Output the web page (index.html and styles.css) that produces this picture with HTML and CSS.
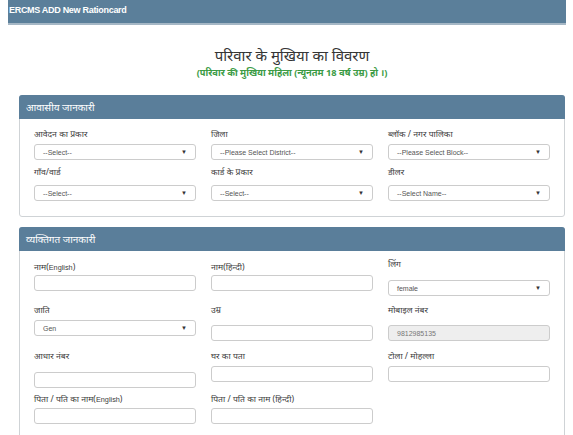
FILE: index.html
```html
<!DOCTYPE html>
<html lang="hi">
<head>
<meta charset="utf-8">
<title>ERCMS ADD New Rationcard</title>
<link rel="stylesheet" href="styles.css">
</head>
<body>
<div class="page">
  <div class="topbar">ERCMS ADD New Rationcard</div>
  <div class="intro">
    <h1 class="title">परिवार के मुखिया का विवरण</h1>
    <p class="subtitle">(परिवार की मुखिया महिला (न्यूनतम 18 वर्ष उम्र) हो ।)</p>
  </div>

  <section class="panel panel-first">
    <div class="panel-heading">आवासीय जानकारी</div>
    <div class="panel-body body-a">
      <div class="row row-a1">
        <div class="field"><label class="lbl">आवेदन का प्रकार</label><div class="ctrl sel g4"><span>--Select--</span><i class="arrow">▼</i></div></div>
        <div class="field"><label class="lbl">जिला</label><div class="ctrl sel g4"><span>--Please Select District--</span><i class="arrow">▼</i></div></div>
        <div class="field"><label class="lbl">ब्लॉक / नगर पालिका</label><div class="ctrl sel g4"><span>--Please Select Block--</span><i class="arrow">▼</i></div></div>
      </div>
      <div class="row row-a2">
        <div class="field"><label class="lbl">गाँव/वार्ड</label><div class="ctrl sel g7"><span>--Select--</span><i class="arrow">▼</i></div></div>
        <div class="field"><label class="lbl">कार्ड के प्रकार</label><div class="ctrl sel g7"><span>--Select--</span><i class="arrow">▼</i></div></div>
        <div class="field"><label class="lbl">डीलर</label><div class="ctrl sel g7"><span>--Select Name--</span><i class="arrow">▼</i></div></div>
      </div>
    </div>
  </section>

  <section class="panel panel-second">
    <div class="panel-heading">व्यक्तिगत जानकारी</div>
    <div class="panel-body body-b">
      <div class="row row-b1">
        <div class="field"><label class="lbl">नाम(<span class="en">English</span>)</label><div class="ctrl g2"></div></div>
        <div class="field"><label class="lbl">नाम(हिन्दी)</label><div class="ctrl g2"></div></div>
        <div class="field"><label class="lbl lift">लिंग</label><div class="ctrl sel g10"><span>female</span><i class="arrow">▼</i></div></div>
      </div>
      <div class="row row-b2">
        <div class="field"><label class="lbl">जाति</label><div class="ctrl sel g4"><span>Gen</span><i class="arrow">▼</i></div></div>
        <div class="field"><label class="lbl">उम्र</label><div class="ctrl g9"></div></div>
        <div class="field"><label class="lbl">मोबाइल नंबर</label><div class="ctrl ro g9"><span>9812985135</span></div></div>
      </div>
      <div class="row row-b3">
        <div class="field"><label class="lbl">आधार नंबर</label><div class="ctrl g10"></div></div>
        <div class="field"><label class="lbl">घर का पता</label><div class="ctrl g4"></div></div>
        <div class="field"><label class="lbl">टोला / मोहल्ला</label><div class="ctrl g4"></div></div>
      </div>
      <div class="row row-b4">
        <div class="field"><label class="lbl">पिता / पति का नाम(<span class="en">English</span>)</label><div class="ctrl g3"></div></div>
        <div class="field"><label class="lbl">पिता / पति का नाम (हिन्दी)</label><div class="ctrl g3"></div></div>
        <div class="field"></div>
      </div>
    </div>
  </section>
</div>
</body>
</html>
```

FILE: styles.css
```css
* { box-sizing: border-box; }
html, body { margin: 0; padding: 0; background: #ffffff; }
body {
  font-family: "Noto Sans", "Liberation Sans", sans-serif;
  color: #333333;
  overflow: hidden;
  height: 435px;
}
.page {
  width: 573px;
}
.topbar {
  margin-left: 8px;
  width: 558px;
  height: 25px;
  background: #5b7f9a;
  border-bottom: 2px solid #a5b7c5;
  color: #ffffff;
  font-family: "Liberation Sans", Arial, sans-serif;
  font-weight: bold;
  font-size: 9px;
  letter-spacing: -0.3px;
  line-height: 21px;
  padding-left: 1px;
}
.intro {
  margin-left: 19px;
  width: 546px;
  text-align: center;
  padding-top: 20px;
  height: 70px;
}
.title {
  margin: 0;
  font-size: 15px;
  line-height: 21px;
  font-weight: normal;
  color: #353535;
}
.subtitle {
  margin: 0;
  font-size: 9.3px;
  line-height: 13px;
  font-weight: bold;
  color: #3b9b45;
}
.panel {
  margin-left: 19px;
  width: 546px;
  border: 1px solid #cfd3d6;
  border-radius: 3px;
  background: #ffffff;
}
.panel-second {
  margin-top: 10px;
}
.panel-heading {
  background: #5a7e9a;
  color: #ffffff;
  font-size: 10px;
  height: 24px;
  line-height: 24px;
  padding-left: 7px;
  margin: -1px -1px 0 -1px;
  border-radius: 3px 3px 0 0;
}
.panel-body {
  padding: 0 14px 0 14px;
}
.body-a { padding-top: 9px; padding-bottom: 15px; }
.body-b { padding-top: 10px; padding-bottom: 30px; }
.row {
  display: grid;
  grid-template-columns: 162px 162px 162px;
  column-gap: 15px;
  align-items: start;
}
.row-a2 { margin-top: 6px; }
.row-b2 { margin-top: 8px; }
.row-b3 { margin-top: 9px; }
.row-b4 { margin-top: 5px; }
.field {
  display: flex;
  flex-direction: column;
}
.lbl {
  display: block;
  height: 12px;
  line-height: 12px;
  font-size: 8.6px;
  color: #3d3d3d;
  white-space: nowrap;
}
.lbl .en {
  font-family: "Liberation Sans", Arial, sans-serif;
  font-size: 7.3px;
}
.lift { margin-top: -3px; }
.ctrl {
  height: 16px;
  border: 1px solid #cccccc;
  border-radius: 3px;
  background: #ffffff;
  display: flex;
  align-items: center;
  justify-content: space-between;
  padding: 0 8px 0 8px;
  font-family: "Liberation Sans", Arial, sans-serif;
  font-size: 7px;
  color: #555555;
}
.ctrl.ro {
  background: #eeeeee;
  color: #777777;
}
.arrow {
  font-style: normal;
  font-size: 6px;
  color: #333333;
}
.g2 { margin-top: 2px; }
.g3 { margin-top: 3px; }
.g4 { margin-top: 4px; }
.g7 { margin-top: 7px; }
.g9 { margin-top: 9px; }
.g10 { margin-top: 10px; }
```
